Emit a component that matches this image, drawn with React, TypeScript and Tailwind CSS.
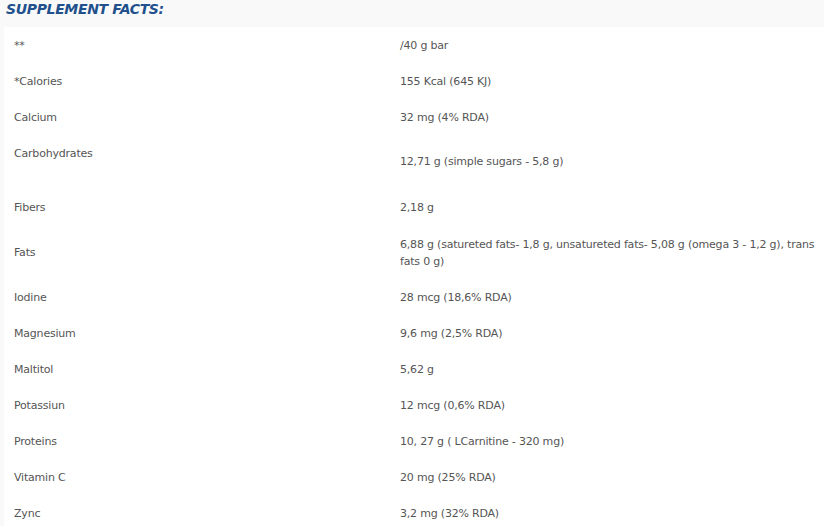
import React from "react";

type Row = { label: string; value: React.ReactNode; kind?: "top" | "tall" };

const rows: Row[] = [
  { label: "**", value: "/40 g bar" },
  { label: "*Calories", value: "155 Kcal (645 KJ)" },
  { label: "Calcium", value: "32 mg (4% RDA)" },
  { label: "Carbohydrates", value: "12,71 g (simple sugars - 5,8 g)", kind: "top" },
  { label: "Fibers", value: "2,18 g" },
  {
    label: "Fats",
    value:
      "6,88 g (satureted fats- 1,8 g, unsatureted fats- 5,08 g (omega 3 - 1,2 g), trans fats 0 g)",
    kind: "tall",
  },
  { label: "Iodine", value: "28 mcg (18,6% RDA)" },
  { label: "Magnesium", value: "9,6 mg (2,5% RDA)" },
  { label: "Maltitol", value: "5,62 g" },
  { label: "Potassiun", value: "12 mcg (0,6% RDA)" },
  { label: "Proteins", value: "10, 27 g ( LCarnitine - 320 mg)" },
  { label: "Vitamin C", value: "20 mg (25% RDA)" },
  { label: "Zync", value: "3,2 mg (32% RDA)" },
];

export default function App() {
  return (
    <div
      className="w-[824px] h-[526px] overflow-hidden bg-[#f9f9f9]"
      style={{ fontFamily: '"DejaVu Sans", Verdana, sans-serif' }}
    >
      <div className="h-[27px] pl-[6px] pt-[0px]">
        <h2 className="text-[14px] leading-[18px] font-bold italic text-[#21508c] tracking-[-0.35px]">
          SUPPLEMENT FACTS:
        </h2>
      </div>
      <div className="ml-[4px] bg-white text-[11px] text-[#555555] tracking-[-0.2px]">
        {rows.map((r, i) => {
          if (r.kind === "top") {
            return (
              <div key={i} className="flex h-[54px] items-start">
                <div className="w-[386px] pl-[10px] pt-[12px] leading-[14px]">{r.label}</div>
                <div className="flex-1 pl-[10px] pt-[20px] leading-[14px]">{r.value}</div>
              </div>
            );
          }
          if (r.kind === "tall") {
            return (
              <div key={i} className="flex h-[54px] items-center pt-[2px]">
                <div className="w-[386px] pl-[10px] leading-[14px]">{r.label}</div>
                <div className="flex-1 pl-[10px] leading-[17px]">{r.value}</div>
              </div>
            );
          }
          return (
            <div key={i} className="flex h-[36px] items-center pt-[2px]">
              <div className="w-[386px] pl-[10px] leading-[14px]">{r.label}</div>
              <div className="flex-1 pl-[10px] leading-[14px]">{r.value}</div>
            </div>
          );
        })}
      </div>
    </div>
  );
}
